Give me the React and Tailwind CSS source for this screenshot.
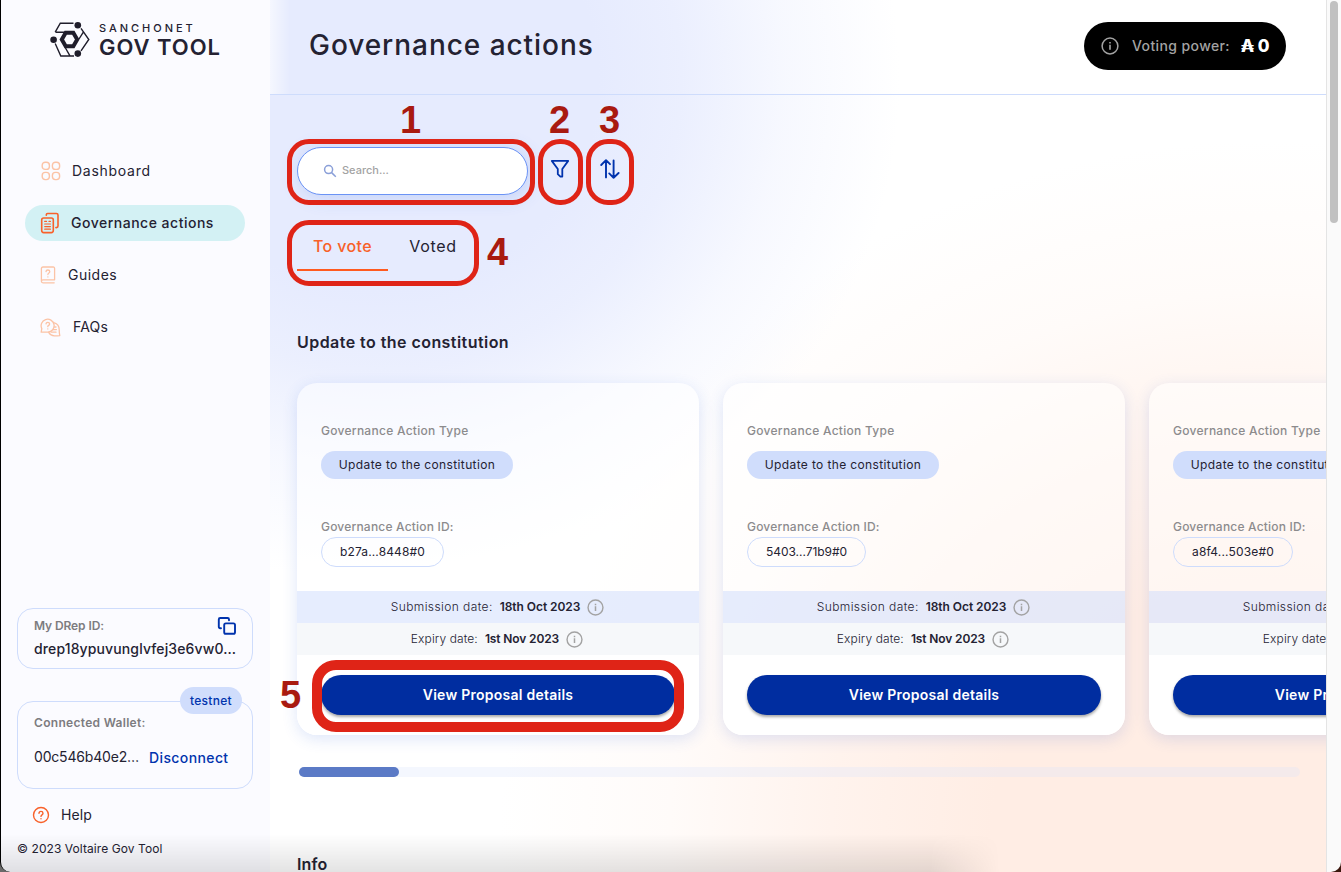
const cards = [
  { id: 'b27a...8448#0', track: 'tracking-[0.011em]', width: 'w-[123px]' },
  { id: '5403...71b9#0', track: 'tracking-[-0.004em]', width: 'w-[119px]' },
  { id: 'a8f4...503e#0', track: 'tracking-[0.014em]', width: 'w-[120px]' },
]

function Logo() {
  return (
    <svg width="40" height="38" viewBox="50 21 40 38" fill="none" stroke="#1f1d2b" strokeWidth="1.4" className="shrink-0">
      <path d="M55.2 32.2 60.3 23.2H73.5M55.5 32.2H64.5M81 28.4 88.8 39.5 81 50.8M83.5 31.8 79 39M55.2 43.5 60.8 56H74M65.2 47.5 69.8 55.6" />
      <path d="M65.7 32.8h7.6l3.9 6.7-3.9 6.7h-7.6l-3.9-6.7z" strokeWidth="4" />
      <g fill="#1f1d2b" stroke="none">
        <circle cx="77.8" cy="25.3" r="3.3" />
        <circle cx="53.6" cy="39.7" r="3.3" />
        <circle cx="77.8" cy="53.6" r="3.3" />
      </g>
    </svg>
  )
}

function DashboardIcon() {
  return (
    <svg width="20" height="20" viewBox="0 0 20 20" fill="none" stroke="#fbc3a6" strokeWidth="1.4">
      <rect x="1.2" y="1.2" width="7.2" height="7.2" rx="3" />
      <rect x="11.4" y="1.2" width="7.2" height="7.2" rx="3" />
      <rect x="1.2" y="11.4" width="7.2" height="7.2" rx="3" />
      <rect x="11.4" y="11.4" width="7.2" height="7.2" rx="3" />
    </svg>
  )
}

function ActionsIcon() {
  return (
    <svg width="20" height="22" viewBox="0 0 20 22" fill="none" stroke="#f8612a" strokeWidth="1.6" strokeLinecap="round" strokeLinejoin="round">
      <rect x="1.7" y="6" width="11.6" height="14.6" rx="2" />
      <path d="M6.3 3.3V2.8Q6.3 1.5 7.6 1.5H16.4Q18 1.5 18 3.1V14Q18 15.6 16.4 15.6H15.9" />
      <path d="M4.7 9.4h1.8M9 9.4h1.4M4.7 12h5.7M4.7 14.6h5.7M4.7 17.2h5.7" strokeWidth="1.2" />
    </svg>
  )
}

function GuidesIcon() {
  return (
    <svg width="16" height="18" viewBox="0 0 16 18" fill="none" stroke="#fbc3a6" strokeWidth="1.3" strokeLinecap="round" strokeLinejoin="round">
      <path d="M14.6 13.6V2.4Q14.6 1 13.2 1H3Q1.4 1 1.4 2.6V15.2M14.6 13.8H3Q1.4 13.8 1.4 15.3T3 16.8H14.2" />
      <path d="M6 5.6Q6.1 4 7.9 4T9.8 5.6Q9.8 6.6 8.7 7.2 7.9 7.7 7.9 8.6M7.9 10.8v.1" />
    </svg>
  )
}

function FaqIcon() {
  return (
    <svg width="21" height="19" viewBox="0 0 21 19" fill="none" stroke="#fbc3a6" strokeWidth="1.3" strokeLinecap="round" strokeLinejoin="round">
      <path d="M1.2 14.2 1.8 10.6A6.5 6.5 0 1 1 7.9 14.2Z" />
      <path d="M14.3 4.8Q19 6 19.2 11.5 19.2 14.6 19.8 17.6 17.5 17.8 14.5 17.8 10.6 17.8 8.7 14.4M14.4 9h1.6M13.2 11.6h3.2M11.4 14.2h4.6" />
      <path d="M6 5.9Q6.1 4.4 7.8 4.4T9.6 5.9Q9.6 6.8 8.6 7.4 7.8 7.9 7.8 8.7M7.8 10.8v.1" />
    </svg>
  )
}

function InfoIcon({ className }) {
  return (
    <svg viewBox="0 0 18 18" fill="none" stroke="currentColor" strokeWidth="1.5" className={className}>
      <circle cx="9" cy="9" r="7.9" />
      <path d="M9 7.8v5M9 4.9v1.6" strokeWidth="1.6" />
    </svg>
  )
}

function HelpIcon() {
  return (
    <svg width="18" height="18" viewBox="0 0 18 18" fill="none" stroke="#f8612a" strokeWidth="1.4" strokeLinecap="round">
      <circle cx="9" cy="9" r="7.5" />
      <path d="M7 7.3Q7.1 5.4 9 5.4T11 7.2Q11 8.2 10 8.8 9 9.4 9 10.4M9 12.6v.1" />
    </svg>
  )
}

function CopyIcon() {
  return (
    <svg width="20" height="20" viewBox="0 0 20 20" fill="none" stroke="#0033ad" strokeWidth="1.9" strokeLinecap="round" strokeLinejoin="round" className="-mr-px">
      <rect x="7.2" y="7.4" width="10.8" height="10.4" rx="1.6" />
      <path d="M4 12.2H3.2Q1.8 12.2 1.8 10.8V3.4Q1.8 2 3.2 2H10.6Q12 2 12 3.4V4.2" />
    </svg>
  )
}

function Sidebar() {
  return (
    <aside className="flex h-full w-[270px] shrink-0 flex-col rounded-bl-[10px] border-l border-black bg-[#fbfbff] text-[#242232]">
      <div className="flex h-[59px] items-end gap-[9px] pl-[49px]">
        <Logo />
        <div className="flex flex-col">
          <span className="text-[11px] leading-[13px] font-medium tracking-[0.27em]">SANCHONET</span>
          <span className="text-[22px] leading-[24px] font-semibold tracking-[0.044em]">GOV TOOL</span>
        </div>
      </div>

      <nav className="mt-[94px] flex flex-col gap-4 pl-6 text-[14px]">
        <a className="flex h-9 w-[220px] items-center gap-[11px] rounded-full pl-4">
          <DashboardIcon />
          <span className="pb-[2px] tracking-[0.052em]">Dashboard</span>
        </a>
        <a className="flex h-9 w-[220px] items-center gap-[11px] rounded-full bg-[#d3f1f4] pl-[15px]">
          <ActionsIcon />
          <span className="pb-[2px] font-medium tracking-[0.036em]">Governance actions</span>
        </a>
        <a className="flex h-9 w-[220px] items-center gap-[12px] rounded-full pl-[15px]">
          <GuidesIcon />
          <span className="pb-[2px] tracking-[0.035em]">Guides</span>
        </a>
        <a className="flex h-9 w-[220px] items-center gap-[11px] rounded-full pl-[15px]">
          <FaqIcon />
          <span className="pb-[2px] pl-px tracking-[0.013em]">FAQs</span>
        </a>
      </nav>

      <div className="mt-auto pl-4">
        <div className="flex h-[61px] w-[236px] flex-col rounded-2xl border border-[#cedcfc] px-4 pt-[7px]">
          <div className="flex h-5 items-center justify-between">
            <span className="text-[12px] font-semibold tracking-[-0.008em] text-[#7d7c80]">My DRep ID:</span>
            <CopyIcon />
          </div>
          <span className="mt-[3px] text-[14px] leading-5 font-medium tracking-[0.009em] whitespace-nowrap">drep18ypuvunglvfej3e6vw0…</span>
        </div>

        <div className="relative mt-8 flex h-[88px] w-[236px] flex-col rounded-2xl border border-[#cedcfc] pl-4">
          <span className="absolute -top-[15px] right-[10px] flex h-[27px] w-[62px] items-center justify-center rounded-full bg-[#d0ddfc] text-[12px] font-medium tracking-[0.025em] text-[#0033ad]">testnet</span>
          <span className="mt-[11px] text-[12px] leading-5 font-semibold tracking-[0.025em] text-[#7d7c80]">Connected Wallet:</span>
          <div className="mt-[14px] flex items-start gap-[10px] text-[14px] leading-5">
            <span className="tracking-[-0.013em]">00c546b40e2…</span>
            <span className="pt-px font-medium tracking-[0.028em] text-[#0033ad]">Disconnect</span>
          </div>
        </div>

        <div className="mt-4 flex h-5 items-center gap-[11px] pl-[15px] text-[14px]">
          <HelpIcon />
          <span className="pb-[2px] tracking-[0.008em]">Help</span>
        </div>
        <p className="mt-[15px] mb-[14px] text-[12px] leading-[18px] tracking-[0.006em]">© 2023 Voltaire Gov Tool</p>
      </div>
    </aside>
  )
}

function Card({ card }) {
  return (
    <article className="flex h-[352px] w-[402px] shrink-0 flex-col overflow-hidden rounded-[20px] bg-white/50 text-[12px] text-[#242232] shadow-[0_4px_15px_rgba(47,98,220,0.16)]">
      <div className="flex h-[208px] flex-col items-start px-6 pt-[38px]">
        <span className="leading-5 font-medium tracking-[0.023em] text-[#8c8b8d]">Governance Action Type</span>
        <span className="mt-[10px] flex h-7 w-[192px] items-center justify-center rounded-full bg-[#d0ddfc] tracking-[0.031em]">Update to the constitution</span>
        <span className="mt-[38px] leading-5 font-medium tracking-[0.016em] text-[#8c8b8d]">Governance Action ID:</span>
        <span className={`flex h-[30px] items-center justify-center rounded-full border border-[#cedcfc] ${card.width} ${card.track}`}>{card.id}</span>
      </div>
      <div className="flex h-8 items-center justify-center gap-[7px] bg-[#c8d6fc]/45 pr-px">
        <span className="font-light tracking-[0.034em]">Submission date:</span>
        <span className="font-semibold tracking-[-0.005em]">18th Oct 2023</span>
        <InfoIcon className="size-[17px] text-[#a3a3a3]" />
      </div>
      <div className="flex h-8 items-center justify-center gap-[7px] bg-[#f6f8fa] pr-[2px]">
        <span className="font-light tracking-[0.009em]">Expiry date:</span>
        <span className="font-semibold tracking-[-0.01em]">1st Nov 2023</span>
        <InfoIcon className="size-[17px] text-[#a3a3a3]" />
      </div>
      <div className="flex-1 bg-white px-6 pt-5">
        <button className="block h-10 w-full rounded-full bg-[#002da0] pb-px text-[14px] font-semibold tracking-[0.018em] text-white shadow-[0_2px_3px_rgba(0,0,0,0.35)]">View Proposal details</button>
      </div>
    </article>
  )
}

function Callouts() {
  return (
    <div className="pointer-events-none absolute inset-0 font-['Liberation_Sans',sans-serif] text-[38px] leading-[38px] font-bold text-[#a91a10]">
      <div className="absolute top-[139px] left-[17px] h-[66px] w-[248px] rounded-[22px] border-[5px] border-[#df2417]" />
      <div className="absolute top-[139px] left-[268px] h-[66px] w-[45px] rounded-[22px] border-[5px] border-[#df2417]" />
      <div className="absolute top-[139px] left-[316px] h-[66px] w-[48px] rounded-[22px] border-[5px] border-[#df2417]" />
      <div className="absolute top-[220px] left-[17px] h-[66px] w-[192px] rounded-[22px] border-[5px] border-[#df2417]" />
      <div className="absolute top-[660px] left-[42px] h-[72px] w-[372px] rounded-[24px] border-[10px] border-[#df2417]" />
      <span className="absolute top-[101px] left-[130px]">1</span>
      <span className="absolute top-[101px] left-[279px]">2</span>
      <span className="absolute top-[101px] left-[329px]">3</span>
      <span className="absolute top-[233px] left-[217px]">4</span>
      <span className="absolute top-[676px] left-[10px]">5</span>
    </div>
  )
}

export default function App() {
  return (
    <div className="relative flex h-[872px] w-[1341px] overflow-hidden bg-[linear-gradient(90deg,#777_50%,#3a160c_50%)] font-['Inter',sans-serif]">
      <Sidebar />
      <main className="relative flex h-full w-[1056px] shrink-0 flex-col overflow-hidden bg-white bg-[radial-gradient(520px_500px_at_110px_80px,#e6ebfe_0%,#e6ebfe_42%,#e6ebfecc_58%,#e6ebfe55_78%,#e6ebfe00_100%),radial-gradient(770px_690px_at_1000px_830px,#ffede4_0%,#ffede4_36%,#ffede4aa_57%,#ffede438_78%,#ffede400_100%)] text-[#242232]">
        <header className="flex h-[95px] shrink-0 items-start justify-between border-b border-[#cedcfc] bg-[linear-gradient(90deg,#ffffff99_0,#ffffff00_20px,#ffffff00_600px,#ffffff_900px)] pt-[22px] pr-10 pl-[39px]">
          <h1 className="mt-[3px] text-[28px] leading-10 font-medium tracking-[0.034em]">Governance actions</h1>
          <div className="flex h-12 w-[202px] items-center rounded-full bg-black pl-[17px] text-[14px]">
            <InfoIcon className="size-[18px] text-[#a3a3a3]" />
            <span className="ml-[13px] pb-px font-medium tracking-[0.028em] text-[#a3a3a3]">Voting power:</span>
            <span className="ml-[11px] text-[17px] leading-6 font-extrabold whitespace-nowrap text-white">₳ 0</span>
          </div>
        </header>

        <div className="mt-[52px] flex items-start pl-[27px]">
          <div className="flex h-12 w-[231px] items-center gap-[5px] rounded-full border border-[#6b93f5] bg-white pl-[25px] text-[11px] font-medium text-[#a3a3a3] shadow-[2px_2px_20px_rgba(47,98,220,0.2)]">
            <svg width="14" height="14" viewBox="0 0 14 14" fill="none" stroke="#8a9fd8" strokeWidth="1.5">
              <circle cx="5.6" cy="5.6" r="4" />
              <path d="m8.6 8.6 4.2 4.2" />
            </svg>
            <span className="pb-[2px]">Search...</span>
          </div>
          <svg width="20" height="20" viewBox="0 0 20 20" fill="none" stroke="#0033ad" strokeWidth="1.8" strokeLinejoin="round" className="mt-3 ml-[22px]">
            <path d="M1.8 1.9H18.2L12.3 10V17.6H10.4L7.8 15.2V10Z" />
          </svg>
          <svg width="22" height="22" viewBox="0 0 22 22" fill="none" stroke="#0033ad" strokeWidth="1.9" strokeLinecap="round" strokeLinejoin="round" className="mt-[11px] ml-[29px]">
            <path d="M7 19.4V2.2M2.2 7 7 2.2 11 6.2M14.6 2.4V19.8M10.2 15.4 14.6 19.8 19.6 15" />
          </svg>
        </div>

        <div className="mt-[26px] flex h-[50px] shrink-0 pl-[27px] text-[16px]">
          <div className="flex w-[91px] items-center justify-center border-b-2 border-[#ff5a1f] pt-[2px] font-medium tracking-[0.025em] text-[#f8612a]">To vote</div>
          <div className="flex w-[90px] items-center justify-center tracking-[0.042em]">Voted</div>
        </div>

        <h2 className="mt-[59px] shrink-0 pl-[27px] text-[16px] leading-6 font-semibold tracking-[0.028em]">Update to the constitution</h2>
        <div className="mt-[29px] flex shrink-0 gap-6 pl-[27px]">
          {cards.map((card) => (
            <Card key={card.id} card={card} />
          ))}
        </div>
        <div className="mt-8 ml-[29px] h-[10px] w-[1001px] shrink-0 rounded-full bg-[#dbe4fb]/30">
          <div className="h-full w-[100px] rounded-full bg-[#5b7ac6]" />
        </div>
        <h2 className="mt-[75px] shrink-0 pl-[27px] text-[16px] leading-6 font-semibold tracking-[0.01em]">Info</h2>
        <Callouts />
      </main>
      <div className="flex h-full flex-1 justify-center rounded-br-[10px] border-l border-[#e4e4e4] bg-[#fafafa] pt-px">
        <div className="h-[222px] w-2 rounded-full bg-[#c1c1c1]" />
      </div>
      <div className="pointer-events-none absolute bottom-0 left-0 h-[38px] w-[1000px] bg-[linear-gradient(to_bottom,transparent,rgba(0,0,0,0.11))] [mask-image:linear-gradient(90deg,black_93%,transparent)]" />
    </div>
  )
}
